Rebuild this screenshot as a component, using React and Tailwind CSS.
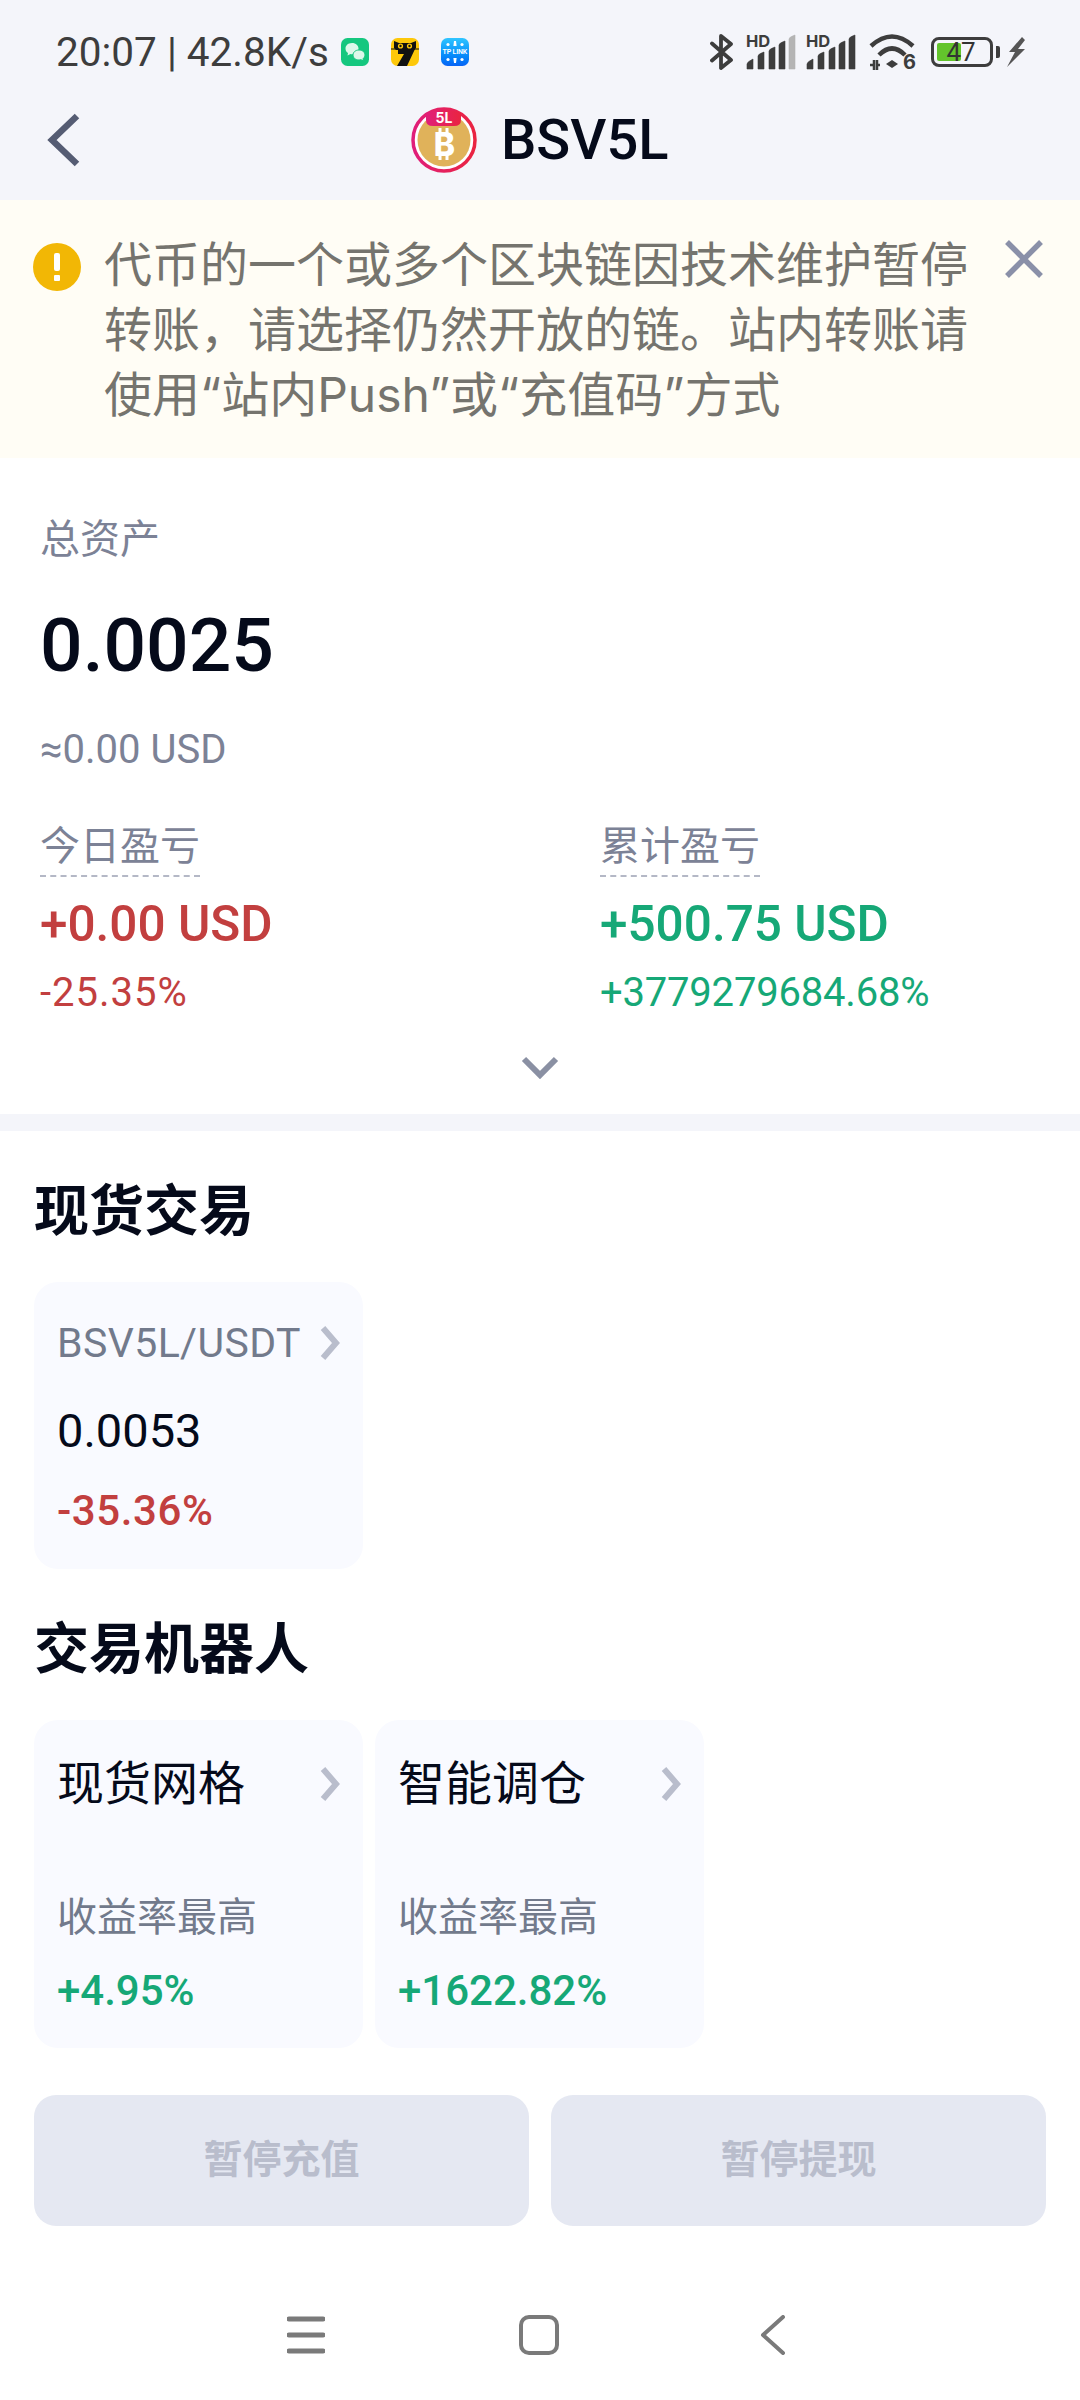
import React from 'react';

const ChevronRight = () => (
  <svg width="20" height="34" viewBox="0 0 20 34" className="shrink-0">
    <path d="M3 2 L16 17 L3 32" fill="none" stroke="#b9bdcc" strokeWidth="6" />
  </svg>
);

const Bars = ({ lastColor = '#3d3d3d' }) => (
  <svg width="52" height="46" viewBox="0 -4 52 46">
    <text x="2" y="14" fontSize="16.5" fontWeight="700" fill="#3d3d3d" fontFamily="Inter">HD</text>
    <path d="M3 36 V31 Q3 29 9 26 V36 Z" fill="#3d3d3d" stroke="#3d3d3d" strokeWidth="0.6" strokeLinejoin="round" />
    <path d="M14 36 V23 Q14 21 20 19 V36 Z" fill="#3d3d3d" stroke="#3d3d3d" strokeWidth="0.6" strokeLinejoin="round" />
    <path d="M25 36 V18 Q25 16 31 14 V36 Z" fill="#3d3d3d" stroke="#3d3d3d" strokeWidth="0.6" strokeLinejoin="round" />
    <path d="M35 36 V12 Q35 10 41 8 V36 Z" fill="#3d3d3d" stroke="#3d3d3d" strokeWidth="0.6" strokeLinejoin="round" />
    <path d="M45 36 V6 Q45 4 51 2 V36 Z" fill={lastColor} stroke={lastColor} strokeWidth="0.6" strokeLinejoin="round" />
  </svg>
);

const StatusBar = () => (
  <div className="flex h-[104px] items-center pl-[56px] pr-[55px]">
    <span className="text-[40.5px] leading-none text-[#3d3d3d]">20:07 | 42.8K/s</span>
    <div className="ml-[12px] flex gap-[22px]">
      {/* wechat */}
      <svg width="28" height="28" viewBox="0 0 28 28">
        <rect width="28" height="28" rx="6.5" fill="#15c77f" />
        <path d="M11 5 C6.5 5 4.5 8 4.5 10.5 C4.5 12.5 5.5 14 7 15 L6.5 17.5 L9.5 16 C10 16.2 10.5 16.2 11 16.2 C15 16.2 17.5 13.5 17.5 10.5 C17.5 7.5 15 5 11 5 Z" fill="#dcf8ea" />
        <path d="M18 12 C14.5 12 12 14.2 12 17 C12 19.8 14.5 22 18 22 C18.7 22 19.3 21.9 20 21.7 L22.5 23 L22 20.8 C23.2 19.8 24 18.5 24 17 C24 14.2 21.5 12 18 12 Z" fill="#dcf8ea" stroke="#15c77f" strokeWidth="1" />
      </svg>
      {/* cat */}
      <svg width="28" height="28" viewBox="0 0 28 28">
        <rect width="28" height="28" rx="6.5" fill="#fdc80a" />
        <path d="M3 3 L8 5 H20 L25 3 V10 L23 12 H5 L3 10 Z" fill="#111" />
        <circle cx="9.5" cy="8" r="2.6" fill="#fdc80a" />
        <circle cx="18.5" cy="8" r="2.6" fill="#fdc80a" />
        <circle cx="9.5" cy="8" r="1.2" fill="#111" />
        <circle cx="18.5" cy="8" r="1.2" fill="#111" />
        <path d="M7 11 H24 L16 28 H6 L13 16 H7 Z" fill="#111" />
        <path d="M0 11 H5 M23 11 H28" stroke="#111" strokeWidth="1" />
      </svg>
      {/* tp-link */}
      <div className="relative flex h-[28px] w-[28px] items-center justify-center rounded-[6.5px] bg-gradient-to-b from-[#30c5ff] to-[#0a63f5]">
        <svg width="28" height="28" viewBox="0 0 28 28" className="absolute inset-0">
          <g fill="#fff">
            <path d="M13 3 H15 L15.6 8 H12.4 Z" />
            <circle cx="7" cy="6.5" r="1.6" />
            <circle cx="21" cy="6.5" r="1.6" />
            <path d="M13 25 H15 L15.6 20 H12.4 Z" />
            <circle cx="7" cy="21.5" r="1.6" />
            <circle cx="21" cy="21.5" r="1.6" />
          </g>
        </svg>
        <span className="whitespace-nowrap text-[7px] font-semibold leading-none tracking-tight text-white">TP LINK</span>
      </div>
    </div>
    <div className="ml-auto flex items-center">
      <svg width="24" height="38" viewBox="0 0 24 38">
        <path d="M2 10.5 L21 27 L11 35 V3 L21 11 L2 27.5" fill="none" stroke="#3d3d3d" strokeWidth="3.8" strokeLinejoin="round" strokeLinecap="round" />
      </svg>
      <div className="ml-[10px] flex"><Bars lastColor="#b4b4b4" /></div>
      <div className="ml-[8px] flex"><Bars /></div>
      <svg width="50" height="50" viewBox="0 -6 50 50" className="ml-[13px] mr-[-2px]">
        <path d="M2 13 Q23 -6 44 13" fill="none" stroke="#3d3d3d" strokeWidth="4.5" />
        <path d="M10 22 Q23 9 36 22" fill="none" stroke="#3d3d3d" strokeWidth="4.5" />
        <path d="M17 31 L23 27 L29 31 L23 35 Z" fill="#3d3d3d" />
        <text x="34" y="36" fontSize="20" fontWeight="700" fill="#3d3d3d" fontFamily="Inter">6</text>
        <path d="M1 32 H5 V27 V37 M8 27 V37 M8 32 H11" fill="none" stroke="#3d3d3d" strokeWidth="2.5" />
      </svg>
      <div className="relative ml-[14px] flex h-[30px] w-[62px] items-center rounded-[8px] border-[3px] border-[#3d3d3d] p-[3px]">
        <div className="h-full w-[24px] rounded-[2px] bg-[#63c42c]" />
        <span className="absolute inset-0 flex items-center justify-center pr-[2px] text-[26px] leading-none text-[#333]">47</span>
      </div>
      <div className="ml-[3px] h-[12px] w-[4px] rounded-r-[2px] bg-[#3d3d3d]" />
      <svg width="18" height="30" viewBox="0 0 18 30" className="ml-[7px]">
        <path d="M15 0 L2 15 L8 15 L0 30 L18 12 L11 12 L18 3 Z" fill="#555" />
      </svg>
    </div>
  </div>
);

const CoinLogo = () => (
  <svg width="66" height="66" viewBox="0 0 66 66">
    <defs>
      <linearGradient id="ring" x1="0" x2="1">
        <stop offset="0" stopColor="#e01e7a" />
        <stop offset="1" stopColor="#ea2440" />
      </linearGradient>
    </defs>
    <circle cx="33" cy="33" r="31" fill="#fff" stroke="url(#ring)" strokeWidth="3.5" />
    <circle cx="33" cy="33" r="26.5" fill="#e0b25a" />
    <path d="M15 6 Q33 -1 50 6 V13 Q50 19 43 19 H22 Q15 19 15 13 Z" fill="url(#ring)" />
    <text x="33" y="16" textAnchor="middle" fontSize="14" fontWeight="700" fill="#fff" fontFamily="Inter">5L</text>
    <text x="33.5" y="49" textAnchor="middle" fontSize="32" fontWeight="800" fill="#fff" fontFamily="Inter">B</text>
    <path d="M29 21 V26 M36 21 V26 M29 48 V53 M36 48 V53" stroke="#fff" strokeWidth="3" />
  </svg>
);

const PairCard = () => (
  <div className="h-[287px] w-[329px] rounded-[24px] bg-[#f9faff] px-[23px] pt-[36px]">
    <div className="flex h-[50px] items-center justify-between">
      <span className="text-[41px] leading-[50px] tracking-[0.4px] text-[#727a8c]">BSV5L/USDT</span>
      <ChevronRight />
    </div>
    <div className="mt-[33px] text-[47px] leading-[60px] text-[#050a1a]">0.0053</div>
    <div className="mt-[25px] text-[42px] font-medium leading-[50px] tracking-[0.6px] text-[#c23f3f]">-35.36%</div>
  </div>
);

const BotCard = ({ name, rate }) => (
  <div className="h-[328px] w-[329px] rounded-[24px] bg-[#f9faff] px-[23px] pt-[34px]">
    <div className="flex h-[60px] items-center justify-between">
      <span className="text-[47px] leading-[60px] text-[#050a1a]">{name}</span>
      <ChevronRight />
    </div>
    <div className="mt-[79px] text-[40px] leading-[50px] text-[#727a8c]">收益率最高</div>
    <div className="mt-[23px] text-[42px] font-medium leading-[50px] text-[#16a877]">{rate}</div>
  </div>
);

const Stat = ({ label, value, pct, color, pctTrack }) => (
  <div className={color}>
    <span className="inline-block border-b-2 border-dashed border-[#b4b8c6] text-[40px] leading-[56px] text-[#7c8296]">{label}</span>
    <div className="mt-[17px] text-[49.5px] font-medium leading-[60px]">{value}</div>
    <div className={`mt-[14px] text-[40px] leading-[50px] ${pctTrack}`}>{pct}</div>
  </div>
);

export default function App() {
  return (
    <div className="h-[2400px] w-[1080px] overflow-hidden bg-white font-['Roboto','Noto_Sans_CJK_SC',sans-serif]">
      <div className="h-[200px] bg-[#f4f5fa]">
        <StatusBar />
        <div className="flex h-[72px] items-center pl-[46px]">
          <svg width="36" height="54" viewBox="0 0 36 54">
            <path d="M31 3 L6 27 L31 51" fill="none" stroke="#555c73" strokeWidth="6.5" />
          </svg>
          <div className="ml-[329px] flex items-center gap-[24px]">
            <CoinLogo />
            <span className="text-[56px] font-medium leading-none text-[#050a1a]">BSV5L</span>
          </div>
        </div>
      </div>

      {/* notice */}
      <div className="flex h-[258px] bg-[#fffdf5] pl-[33px] pt-[32px]">
        <div className="mt-[11px] flex h-[48px] w-[48px] shrink-0 items-center justify-center rounded-full bg-[#f2b705]">
          <div className="flex flex-col items-center gap-[4px]">
            <div className="h-[18px] w-[6px] rounded-[2px] bg-white" />
            <div className="h-[6px] w-[6px] rounded-[1px] bg-white" />
          </div>
        </div>
        <p className="ml-[23px] w-[867px] font-['Inter','Noto_Sans_CJK_SC',sans-serif] text-[48px] leading-[65px] text-[#75746e]">
          代币的一个或多个区块链因技术维护暂停转账，请选择仍然开放的链。站内转账请使用“站内Push”或“充值码”方式
        </p>
        <svg width="38" height="38" viewBox="0 0 38 38" className="ml-[34px] mt-[8px] shrink-0">
          <path d="M2 2 L36 36 M36 2 L2 36" stroke="#8a90a8" strokeWidth="5.5" />
        </svg>
      </div>

      {/* assets */}
      <div className="h-[656px] px-[40px] pt-[54px]">
        <div className="text-[40px] leading-[56px] text-[#7c8296]">总资产</div>
        <div className="mt-[32px] text-[75px] font-medium leading-[90px] text-[#050a1a]">0.0025</div>
        <div className="mt-[32px] text-[40px] leading-[56px] text-[#7c8296]">≈0.00 USD</div>
        <div className="mt-[41px] grid grid-cols-[560px_1fr]">
          <Stat label="今日盈亏" value="+0.00 USD" pct="-25.35%" color="text-[#c23f3f]" pctTrack="tracking-[1px]" />
          <Stat label="累计盈亏" value="+500.75 USD" pct="+3779279684.68%" color="text-[#16a877]" pctTrack="tracking-[-0.2px]" />
        </div>
        <div className="mt-[38px] flex justify-center">
          <svg width="38" height="23" viewBox="0 0 38 23">
            <path d="M3 3 L19 19 L35 3" fill="none" stroke="#8a90a3" strokeWidth="6" />
          </svg>
        </div>
      </div>
      <div className="h-[17px] bg-[#f4f5fa]" />

      <div className="px-[34px]">
        <h2 className="mt-[42px] text-[55px] font-bold leading-[76px] text-[#050a1a]">现货交易</h2>
        <div className="mt-[33px]">
          <PairCard />
        </div>
        <h2 className="mt-[42px] text-[55px] font-bold leading-[76px] text-[#050a1a]">交易机器人</h2>
        <div className="mt-[33px] flex gap-[12px]">
          <BotCard name="现货网格" rate="+4.95%" />
          <BotCard name="智能调仓" rate="+1622.82%" />
        </div>
        <div className="mt-[47px] flex gap-[22px]">
          <button className="h-[131px] w-[496px] rounded-[22px] bg-[#e5e8f2] text-[39px] font-bold text-[#b9bdcc]">暂停充值</button>
          <button className="h-[131px] w-[496px] rounded-[22px] bg-[#e5e8f2] text-[39px] font-bold text-[#b9bdcc]">暂停提现</button>
        </div>
      </div>

      {/* android nav */}
      <div className="mt-[87px] flex h-[44px] items-center pl-[287px]">
        <svg width="38" height="38" viewBox="0 0 38 38">
          <path d="M2 3 H36 M2 19 H36 M2 35 H36" stroke="#7a7a7a" strokeWidth="5" strokeLinecap="round" />
        </svg>
        <svg width="40" height="40" viewBox="0 0 40 40" className="ml-[194px]">
          <rect x="2" y="2" width="36" height="36" rx="8" fill="none" stroke="#7a7a7a" strokeWidth="4" />
        </svg>
        <svg width="26" height="40" viewBox="0 0 26 40" className="ml-[201px]">
          <path d="M23 2 L3 20 L23 38" fill="none" stroke="#7a7a7a" strokeWidth="4" strokeLinecap="round" strokeLinejoin="round" />
        </svg>
      </div>
    </div>
  );
}
